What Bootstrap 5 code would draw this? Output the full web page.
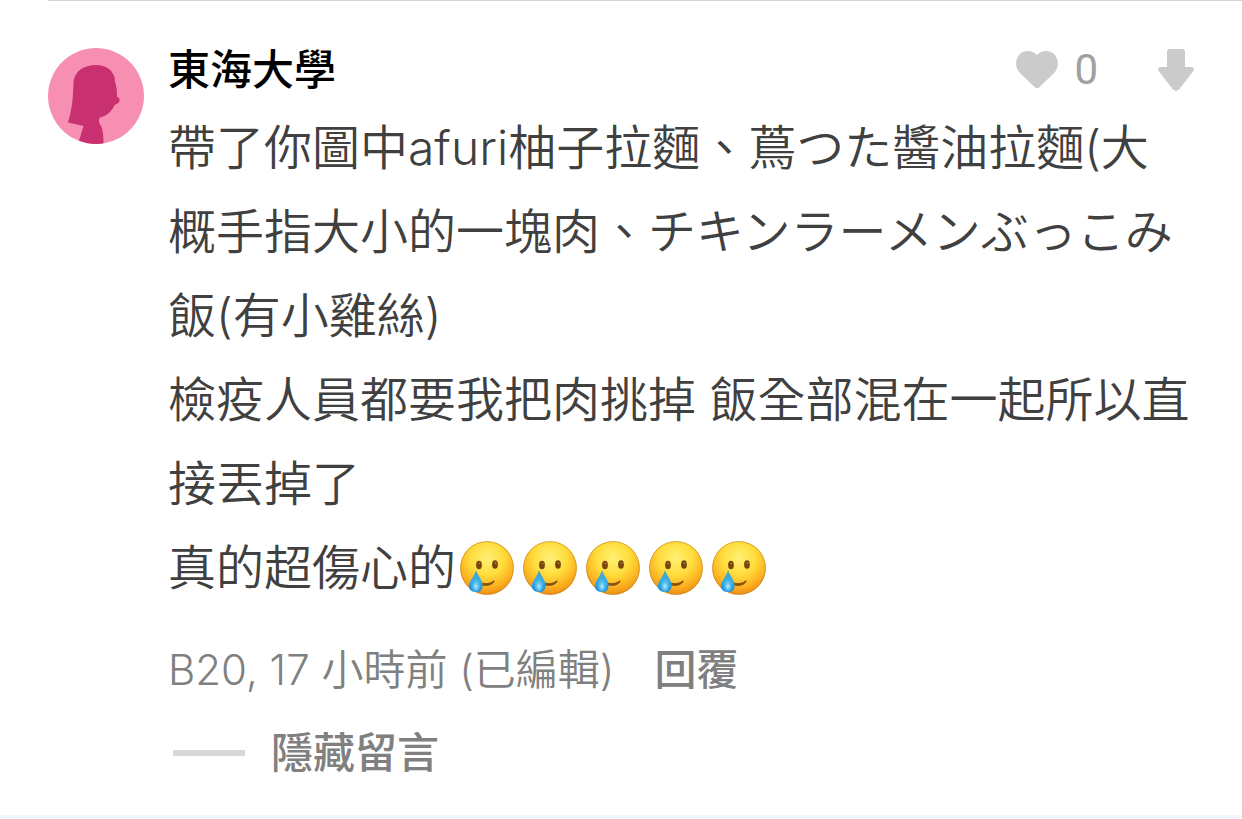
<!DOCTYPE html>
<html lang="zh-Hant-TW">
<head>
<meta charset="utf-8">
<meta name="viewport" content="width=device-width, initial-scale=1">
<title>東海大學</title>
<link href="https://cdn.jsdelivr.net/npm/bootstrap@5.3.0/dist/css/bootstrap.min.css" rel="stylesheet">
<style>
body{font-family:Inter,"Noto Sans CJK TC",sans-serif;color:#404040;background:#fff}
.comment{margin-left:48px;padding:47px 48px 32px 0;border-top:1px solid #d4d4d4;gap:24px}
.avatar{width:96px;height:96px}
.author{font-size:42px;line-height:44px;font-weight:500;color:#000}
.votes{gap:60px}
.vote{color:#cbcbcb;line-height:44px}
.vote-count{font-size:42px;color:#a0a0a0;font-family:Roboto,sans-serif;margin-left:16px}
.message{font-size:48px;line-height:84px;margin-top:14px;font-weight:350}
.emoji{width:54px;height:54px;margin:0 5px 0 4px}
.meta{font-size:42px;line-height:60px;color:#808080;margin-top:30px;gap:40px}
.meta-text{font-weight:350}
.reply,.fold{font-size:42px;line-height:60px;color:#808080;font-weight:500}
.fold{margin-top:23px;gap:26px;padding-left:5px}
.fold-rule{width:72px;height:6px;background:#d8d8d8}
.next{height:3px;background:#eff6fb}
</style>
</head>
<body>
<svg width="0" height="0" class="position-absolute" aria-hidden="true">
<defs>
<radialGradient id="skin" cx=".5" cy=".32" r=".7"><stop offset="0" stop-color="#fff176"/><stop offset=".45" stop-color="#ffdc3c"/><stop offset=".75" stop-color="#fdb321"/><stop offset="1" stop-color="#e98812"/></radialGradient>
<linearGradient id="drop" x1="0" y1="0" x2="0" y2="1"><stop offset="0" stop-color="#4c9fae"/><stop offset=".45" stop-color="#38afe6"/><stop offset="1" stop-color="#1789d5"/></linearGradient>
<radialGradient id="shine" cx=".5" cy=".65" r=".5"><stop offset="0" stop-color="#b9f2ff"/><stop offset="1" stop-color="#58c8f5" stop-opacity="0"/></radialGradient>
<symbol id="tearful" viewBox="0 0 54 54">
<circle cx="27" cy="27" r="26.8" fill="url(#skin)"/>
<circle cx="27" cy="27" r="26.4" fill="none" stroke="#b98220" stroke-opacity=".65" stroke-width=".9"/>
<ellipse cx="19" cy="24" rx="2.9" ry="4.300" fill="#77450b"/><ellipse cx="35" cy="23.500" rx="2.900" ry="4.300" fill="#77450b"/>
<circle cx="19.500" cy="22.600" r="1" fill="#ae792a"/><circle cx="35.500" cy="22.100" r="1" fill="#ae792a"/>
<path d="M20 41.500C26 43.500 31 42.500 33.500 39.800Q34.500 40 34 41C30.500 45 26 45 20 43.500Z" fill="#86500c" stroke="#86500c" stroke-width=".8"/>
<path d="M16 29C17.500 34 22.600 39 22.600 44.500C22.600 49.500 19 51.500 15.500 51C10.500 50.500 8 47.500 9 43.500C10.300 38.500 14.500 35 16 29Z" fill="url(#drop)"/>
<ellipse cx="16" cy="43" rx="5.500" ry="8" fill="url(#shine)"/>
</symbol>
</defs>
</svg>
<main>
<article class="comment d-flex align-items-start">
<svg class="avatar flex-shrink-0" viewBox="0 0 96 96" role="img" aria-label="東海大學">
<clipPath id="round"><circle cx="48" cy="48" r="48"/></clipPath>
<g clip-path="url(#round)"><path fill="#f78fb3" d="M0 0H96V96H0Z"/>
<path fill="#c9306f" d="M20 74.500C24 61 25 51 25.500 35C26 23 36 17 48 17C58 17 65 22 67 31L66.500 32C68.500 37 69 43 69 49C72.500 49 73 56 67 56.500C64 63 59 68 52 69.500C50 72 51 75 53 78C55 82 55.500 88 55.500 96H30L35.500 78Z"/></g>
</svg>
<div class="flex-grow-1">
<header class="d-flex justify-content-between align-items-center">
<h1 class="author mb-0">東海大學</h1>
<div class="votes d-flex align-items-center">
<button type="button" class="vote btn p-0 border-0 d-flex align-items-center" aria-label="喜歡 0"><svg width="42" height="38" viewBox="0 0 42 38"><path fill="currentColor" d="M21 4C26-1.500 35-1 39 4C43 9 43 17 38 22L23 36.500Q21 38 19 36.500L4 22C-1 17-1 9 3 4C7-1 16-1.500 21 4Z"/></svg><span class="vote-count">0</span></button>
<button type="button" class="vote btn p-0 border-0 d-flex align-items-center" aria-label="不喜歡"><svg width="36" height="42" viewBox="0 0 36 42"><path fill="currentColor" d="M12 0H24Q27 0 27 3V18H34Q37.500 19 35 22.500L21 40.500Q18 43 15 40.500L1 22.500Q-1.500 19 2 18H9V3Q9 0 12 0Z"/></svg></button>
</div>
</header>
<div class="message">
<p class="mb-0">帶了你圖中afuri柚子拉麵、蔦つた醬油拉麵(大概手指大小的一塊肉、チキンラーメンぶっこみ飯(有小雞絲)</p>
<p class="mb-0">檢疫人員都要我把肉挑掉 飯全部混在一起所以直接丟掉了</p>
<p class="mb-0 d-flex align-items-center"><span>真的超傷心的</span><svg class="emoji" role="img" aria-label="含淚微笑"><use href="#tearful"/></svg><svg class="emoji" aria-hidden="true"><use href="#tearful"/></svg><svg class="emoji" aria-hidden="true"><use href="#tearful"/></svg><svg class="emoji" aria-hidden="true"><use href="#tearful"/></svg><svg class="emoji" aria-hidden="true"><use href="#tearful"/></svg></p>
</div>
<div class="meta d-flex align-items-center">
<span class="meta-text">B20, 17 小時前 (已編輯)</span>
<button type="button" class="reply btn p-0 border-0">回覆</button>
</div>
<button type="button" class="fold btn border-0 py-0 pe-0 d-flex align-items-center"><span class="fold-rule"></span>隱藏留言</button>
</div>
</article>
<div class="next"></div>
</main>
<script src="https://cdn.jsdelivr.net/npm/bootstrap@5.3.0/dist/js/bootstrap.bundle.min.js"></script>
</body>
</html>
